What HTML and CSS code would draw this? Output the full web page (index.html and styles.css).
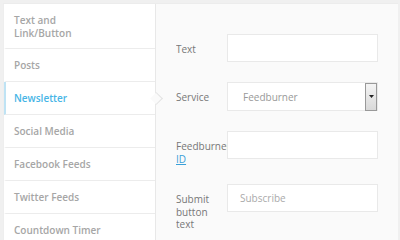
FILE: index.html
```
<!DOCTYPE html>
<html>
<head>
<meta charset="utf-8">
<link rel="stylesheet" href="styles.css">
</head>
<body>
<div class="wrap">
  <ul class="tabs">
    <li class="tab">Text and<br>Link/Button</li>
    <li class="tab">Posts</li>
    <li class="tab active">Newsletter</li>
    <li class="tab">Social Media</li>
    <li class="tab">Facebook Feeds</li>
    <li class="tab">Twitter Feeds</li>
    <li class="tab">Countdown Timer</li>
  </ul>
  <div class="panel">
    <div class="row">
      <div class="label">Text</div>
      <div class="field"></div>
    </div>
    <div class="row">
      <div class="label">Service</div>
      <div class="field select">
        <span class="value">Feedburner</span>
        <span class="arrow"><svg width="5" height="3" viewBox="0 0 5 3"><path d="M0 0H5L2.5 3Z" fill="#222"/></svg></span>
      </div>
    </div>
    <div class="row">
      <div class="label">Feedburner <a href="#">ID</a></div>
      <div class="field"></div>
    </div>
    <div class="row">
      <div class="label">Submit button text</div>
      <div class="field"><span class="ph">Subscribe</span></div>
    </div>
  </div>
</div>
</body>
</html>
```
FILE: styles.css
```
html, body { margin: 0; padding: 0; }
body {
  width: 400px; height: 240px; overflow: hidden;
  background: #f0f0f0;
  font-family: "Open Sans", "Liberation Sans", sans-serif;
  font-size: 10px;
}
.wrap {
  display: flex;
  margin: 3px 2px 0 3px;
  height: 237px;
  overflow: hidden;
  border-top: 1px solid #ececec;
}
.tabs {
  list-style: none; margin: 0; padding: 0;
  width: 151px;
  background: #fff;
  border-left: 1px solid #eee;
  border-right: 1px solid #e8e8e8;
  flex: none;
}
.tab {
  position: relative;
  padding: 8px 8px;
  height: 16px;
  line-height: 16px;
  color: #a6a6a6;
  font-weight: 600;
  border-bottom: 1px solid #ececec;
  border-left: 2px solid transparent;
}
.tab:first-child { height: 26px; line-height: 13px; padding-top: 10px; padding-bottom: 8px; }
.tab.active { color: #47b5e6; border-left-color: #bfe3f4; }
.tab.active::after {
  content: ""; position: absolute; right: -6px; top: 12px;
  width: 8px; height: 8px; background: #fafafa;
  border-top: 1px solid #e2e2e2; border-right: 1px solid #e2e2e2;
  transform: rotate(45deg);
}
.panel {
  flex: 1;
  background: #fafafa;
  padding: 30px 20px 0 20px;
  border-right: 1px solid #eee;
}
.row { display: flex; margin-bottom: 20px; }
.row:nth-child(2) .field { height: 27px; }
.row:nth-child(3) { margin-bottom: 19px; }
.label {
  width: 51px; flex: none; overflow: hidden;
  padding-top: 9px;
  line-height: 12.5px;
  color: #777;
  font-weight: 400;
}
.label a { color: #3aa0d8; }
.field {
  width: 149px; height: 26px;
  background: #fff;
  border: 1px solid #e9e9e9;
  display: flex; align-items: center;
  box-sizing: content-box;
}
.select { position: relative; }
.value { color: #999; padding-left: 15px; flex: 1; }
.ph { color: #aaa; padding-left: 12px; }
.arrow {
  width: 10px; height: 26px; margin-right: 0;
  border: 1px solid #999;
  background: linear-gradient(#f4f4f4, #d9d9d9);
  display: flex; align-items: center; justify-content: center;
}
```
